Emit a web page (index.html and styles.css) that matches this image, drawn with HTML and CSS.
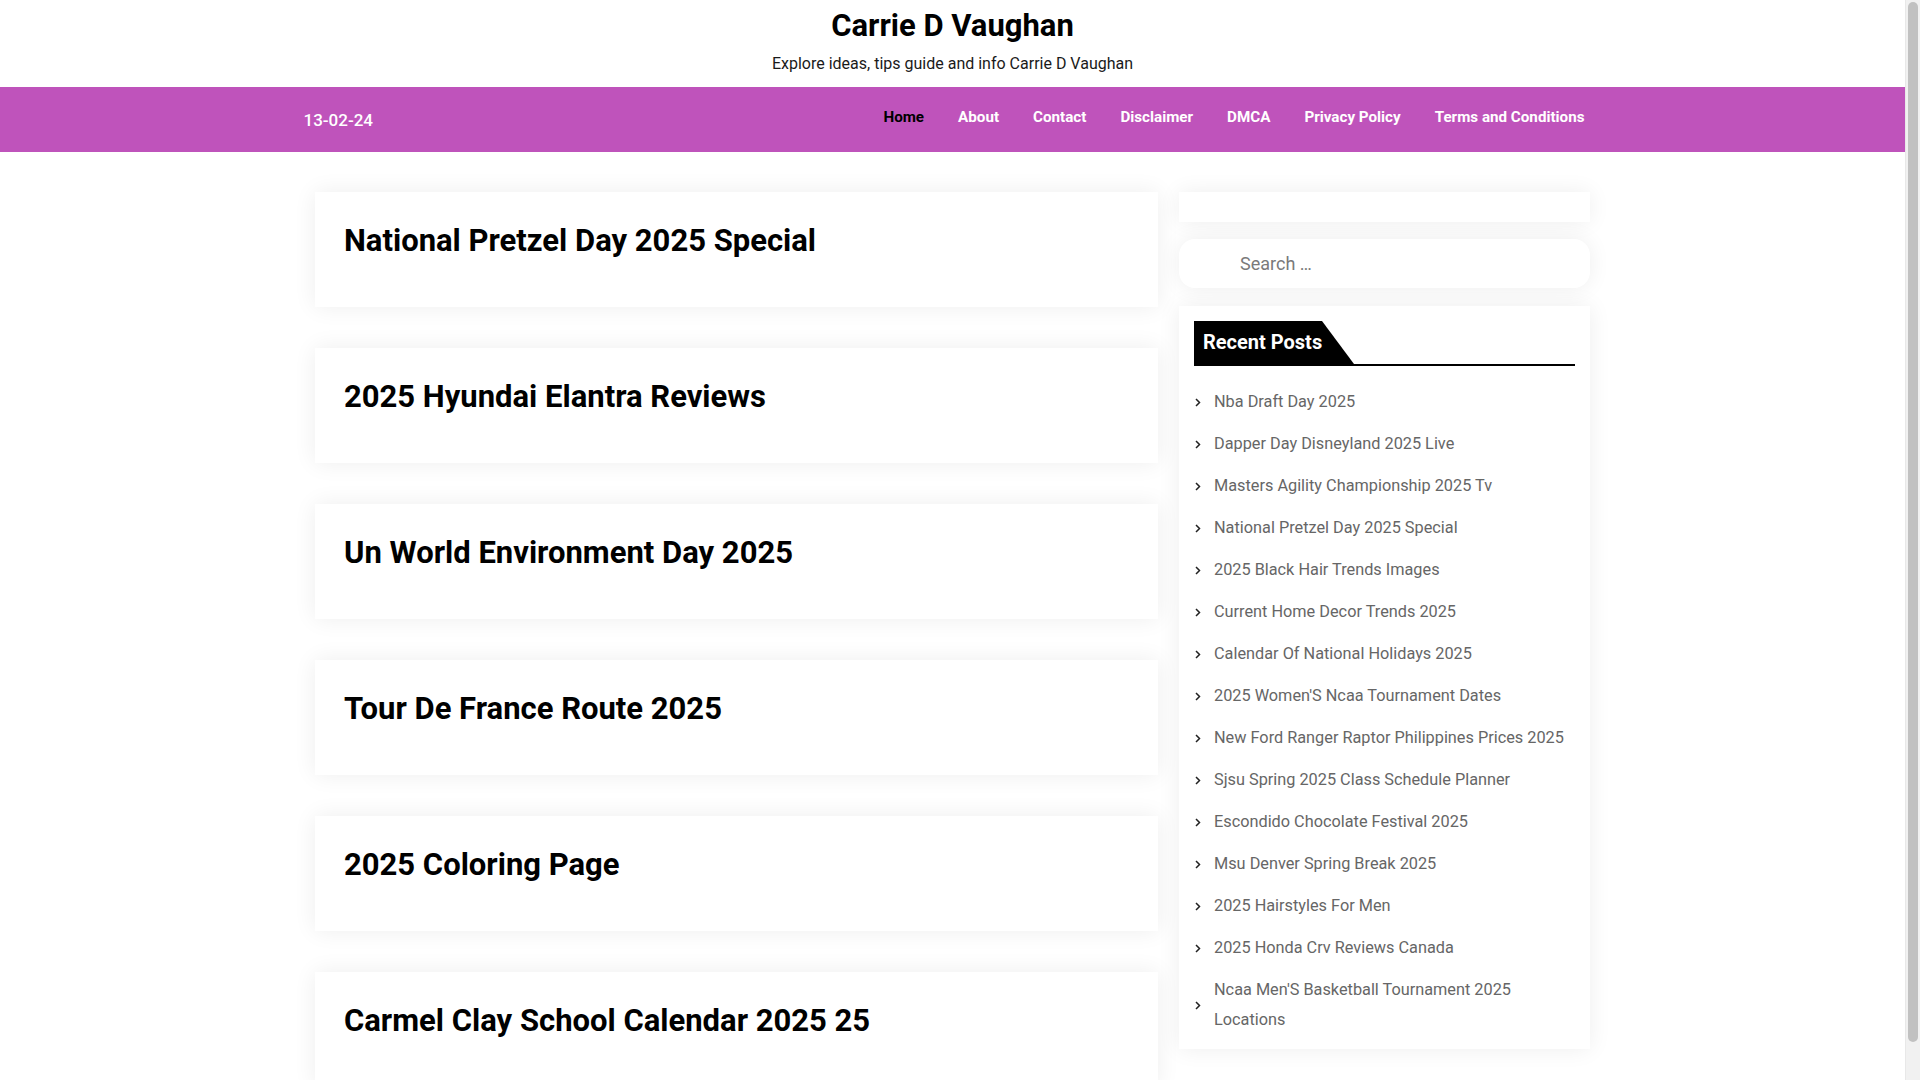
FILE: index.html
```html
<!DOCTYPE html>
<html lang="en">
<head>
<meta charset="utf-8">
<title>Carrie D Vaughan</title>
<link rel="stylesheet" href="styles.css">
</head>
<body>
<div class="page">
<header class="site-header">
  <h1 class="site-title">Carrie D Vaughan</h1>
  <p class="site-desc">Explore ideas, tips guide and info Carrie D Vaughan</p>
</header>
<nav class="main-nav">
  <div class="nav-inner">
    <div class="nav-date">13-02-24</div>
    <ul class="menu">
      <li><a class="active" href="#">Home</a></li>
      <li><a href="#">About</a></li>
      <li><a href="#">Contact</a></li>
      <li><a href="#">Disclaimer</a></li>
      <li><a href="#">DMCA</a></li>
      <li><a href="#">Privacy Policy</a></li>
      <li><a href="#">Terms and Conditions</a></li>
    </ul>
  </div>
</nav>
<div class="container">
  <main class="posts">
    <article class="card"><h2 class="card-title">National Pretzel Day 2025 Special</h2></article>
    <article class="card"><h2 class="card-title">2025 Hyundai Elantra Reviews</h2></article>
    <article class="card"><h2 class="card-title">Un World Environment Day 2025</h2></article>
    <article class="card"><h2 class="card-title">Tour De France Route 2025</h2></article>
    <article class="card"><h2 class="card-title">2025 Coloring Page</h2></article>
    <article class="card"><h2 class="card-title">Carmel Clay School Calendar 2025 25</h2></article>
  </main>
  <aside class="sidebar">
    <div class="widget empty"></div>
    <div class="widget search"><input class="search-field" type="search" placeholder="Search …"></div>
    <div class="widget recent">
      <div class="widget-head"><h3 class="widget-title">Recent Posts</h3></div>
      <ul class="recent-list">
        <li><span class="chev"><svg width="6" height="9" viewBox="0 0 6 9"><polyline points="1,1 4.5,4.5 1,8" fill="none" stroke="#222" stroke-width="1.5"/></svg></span><a href="#">Nba Draft Day 2025</a></li>
        <li><span class="chev"><svg width="6" height="9" viewBox="0 0 6 9"><polyline points="1,1 4.5,4.5 1,8" fill="none" stroke="#222" stroke-width="1.5"/></svg></span><a href="#">Dapper Day Disneyland 2025 Live</a></li>
        <li><span class="chev"><svg width="6" height="9" viewBox="0 0 6 9"><polyline points="1,1 4.5,4.5 1,8" fill="none" stroke="#222" stroke-width="1.5"/></svg></span><a href="#">Masters Agility Championship 2025 Tv</a></li>
        <li><span class="chev"><svg width="6" height="9" viewBox="0 0 6 9"><polyline points="1,1 4.5,4.5 1,8" fill="none" stroke="#222" stroke-width="1.5"/></svg></span><a href="#">National Pretzel Day 2025 Special</a></li>
        <li><span class="chev"><svg width="6" height="9" viewBox="0 0 6 9"><polyline points="1,1 4.5,4.5 1,8" fill="none" stroke="#222" stroke-width="1.5"/></svg></span><a href="#">2025 Black Hair Trends Images</a></li>
        <li><span class="chev"><svg width="6" height="9" viewBox="0 0 6 9"><polyline points="1,1 4.5,4.5 1,8" fill="none" stroke="#222" stroke-width="1.5"/></svg></span><a href="#">Current Home Decor Trends 2025</a></li>
        <li><span class="chev"><svg width="6" height="9" viewBox="0 0 6 9"><polyline points="1,1 4.5,4.5 1,8" fill="none" stroke="#222" stroke-width="1.5"/></svg></span><a href="#">Calendar Of National Holidays 2025</a></li>
        <li><span class="chev"><svg width="6" height="9" viewBox="0 0 6 9"><polyline points="1,1 4.5,4.5 1,8" fill="none" stroke="#222" stroke-width="1.5"/></svg></span><a href="#">2025 Women'S Ncaa Tournament Dates</a></li>
        <li><span class="chev"><svg width="6" height="9" viewBox="0 0 6 9"><polyline points="1,1 4.5,4.5 1,8" fill="none" stroke="#222" stroke-width="1.5"/></svg></span><a href="#">New Ford Ranger Raptor Philippines Prices 2025</a></li>
        <li><span class="chev"><svg width="6" height="9" viewBox="0 0 6 9"><polyline points="1,1 4.5,4.5 1,8" fill="none" stroke="#222" stroke-width="1.5"/></svg></span><a href="#">Sjsu Spring 2025 Class Schedule Planner</a></li>
        <li><span class="chev"><svg width="6" height="9" viewBox="0 0 6 9"><polyline points="1,1 4.5,4.5 1,8" fill="none" stroke="#222" stroke-width="1.5"/></svg></span><a href="#">Escondido Chocolate Festival 2025</a></li>
        <li><span class="chev"><svg width="6" height="9" viewBox="0 0 6 9"><polyline points="1,1 4.5,4.5 1,8" fill="none" stroke="#222" stroke-width="1.5"/></svg></span><a href="#">Msu Denver Spring Break 2025</a></li>
        <li><span class="chev"><svg width="6" height="9" viewBox="0 0 6 9"><polyline points="1,1 4.5,4.5 1,8" fill="none" stroke="#222" stroke-width="1.5"/></svg></span><a href="#">2025 Hairstyles For Men</a></li>
        <li><span class="chev"><svg width="6" height="9" viewBox="0 0 6 9"><polyline points="1,1 4.5,4.5 1,8" fill="none" stroke="#222" stroke-width="1.5"/></svg></span><a href="#">2025 Honda Crv Reviews Canada</a></li>
        <li><span class="chev"><svg width="6" height="9" viewBox="0 0 6 9"><polyline points="1,1 4.5,4.5 1,8" fill="none" stroke="#222" stroke-width="1.5"/></svg></span><a href="#">Ncaa Men'S Basketball Tournament 2025 Locations</a></li>
      </ul>
    </div>
  </aside>
</div>
</div>
<div class="fake-scrollbar"><div class="fake-thumb"></div></div>
</body>
</html>
```
FILE: styles.css
```css
* { box-sizing: border-box; }
html, body { margin: 0; padding: 0; }
body {
  background: #fff;
  font-family: Roboto, "Noto Sans", Arial, sans-serif;
  color: #000;
}
a { text-decoration: none; color: inherit; }

.page {
  width: calc(100% - 15px);
}

.fake-scrollbar {
  position: fixed;
  top: 0;
  right: 0;
  width: 15px;
  height: 100vh;
  background: #f1f1f1;
  border-left: 1px solid #e8e8e8;
  padding: 2px 2px 0 2px;
}
.fake-thumb {
  width: 100%;
  height: 1040px;
  background: #c1c1c1;
  border-radius: 6px;
}

.site-header {
  height: 87px;
  text-align: center;
  padding-top: 7px;
}
.site-title {
  margin: 0;
  font-size: 31px;
  line-height: 38px;
  font-weight: 700;
  color: #000;
}
.site-desc {
  margin: 8px 0 0;
  font-size: 16px;
  line-height: 22px;
  color: #1a1a1a;
}

.main-nav {
  background: #bf53bb;
  height: 65px;
}
.nav-inner {
  width: 1298px;
  margin: 0 auto;
  display: flex;
  justify-content: space-between;
  align-items: flex-start;
}
.nav-date {
  padding-top: 23px;
  font-size: 17px;
  line-height: 20px;
  font-weight: 500;
  color: #fff;
}
.menu {
  list-style: none;
  margin: 0;
  padding: 0;
  display: flex;
}
.menu a {
  display: block;
  padding: 20px 17px 0;
  font-size: 15.2px;
  line-height: 20px;
  font-weight: 700;
  color: #fff;
}
.menu a.active { color: #000; }

.container {
  width: 1275px;
  margin: 40px auto 0;
  display: flex;
  gap: 21px;
  align-items: flex-start;
}
.posts {
  width: 843px;
  display: flex;
  flex-direction: column;
  gap: 41px;
}
.card {
  background: #fff;
  box-shadow: 0 0 22px rgba(0, 0, 0, 0.07);
  height: 115px;
  padding: 31px 29px 0;
}
.card-title {
  margin: 0;
  font-size: 31px;
  line-height: 36px;
  font-weight: 700;
  color: #000;
}

.sidebar {
  width: 411px;
  display: flex;
  flex-direction: column;
  gap: 17px;
}
.widget {
  background: #fff;
  box-shadow: 0 0 22px rgba(0, 0, 0, 0.07);
}
.widget.empty { height: 30px; }
.widget.search {
  height: 49px;
  border-radius: 16px;
  margin-bottom: 1px;
}
.search-field {
  width: 100%;
  height: 49px;
  border: 0;
  outline: none;
  background: transparent;
  padding: 0 0 0 61px;
  font-family: Roboto, "Noto Sans", Arial, sans-serif;
  font-size: 18px;
  color: #777;
  -webkit-appearance: none;
  appearance: none;
}
.search-field::placeholder { color: #7a7a7a; }

.widget.recent {
  padding: 15px 15px 8px;
}
.widget-head {
  border-bottom: 2px solid #000;
  height: 45px;
}
.widget-title {
  margin: 0;
  width: 160px;
  height: 43px;
  background: #000;
  color: #fff;
  font-size: 20px;
  line-height: 43px;
  font-weight: 700;
  padding-left: 9px;
  clip-path: polygon(0 0, 128px 0, 160px 100%, 0 100%);
}
.recent-list {
  list-style: none;
  margin: 15px 0 0;
  padding: 0;
}
.recent-list li {
  display: flex;
  align-items: center;
  padding: 6px 0;
}
.chev {
  flex: 0 0 20px;
  display: flex;
  align-items: center;
  padding-left: 1px;
}
.recent-list a {
  font-size: 16.3px;
  line-height: 30px;
  color: #666;
}
```
